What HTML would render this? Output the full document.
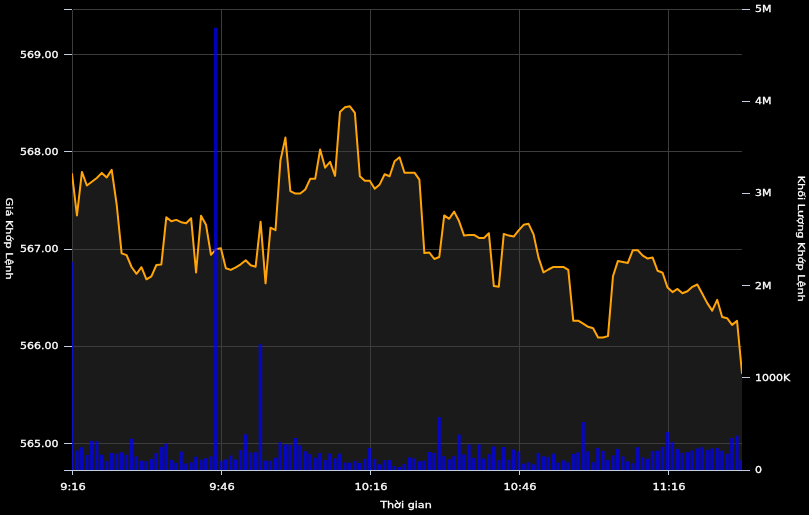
<!DOCTYPE html>
<html lang="vi">
<head>
<meta charset="utf-8">
<title>Giá Khớp Lệnh / Khối Lượng Khớp Lệnh</title>
<style>
html,body{margin:0;padding:0;background:#000;}
body{width:809px;height:515px;overflow:hidden;}
svg{display:block;will-change:transform;}
text{font-family:"DejaVu Sans","Liberation Sans",sans-serif;font-size:11px;font-weight:normal;fill:#fff;stroke:#fff;stroke-width:0.3px;}
</style>
</head>
<body>
<svg width="809" height="515" viewBox="0 0 809 515">
<rect x="0" y="0" width="809" height="515" fill="#000"/>
<defs><clipPath id="plot"><rect x="72" y="10" width="670" height="460"/></clipPath></defs>
<path d="M64 9.5H72M64 54.5H72M64 151.5H72M64 249.5H72M64 346.5H72M64 443.5H72M742 9.5H750M742 101.5H750M742 193.5H750M742 285.5H750M742 377.5H750M72.5 470V475M221.5 470V475M370.5 470V475M519.5 470V475M668.5 470V475M64 470.5H750" stroke="#c0d0e0" stroke-width="1" fill="none"/>
<g clip-path="url(#plot)">
<path d="M72.00 173.9 L76.96 215.4 L81.93 171.9 L86.89 185.5 L91.85 181.8 L96.81 178.0 L101.78 172.9 L106.74 177.4 L111.70 169.9 L116.67 204.5 L121.63 253.4 L126.59 255.1 L131.56 267.0 L136.52 273.8 L141.48 267.2 L146.44 279.3 L151.41 276.3 L156.37 265.0 L161.33 264.5 L166.30 217.3 L171.26 221.2 L176.22 219.9 L181.19 222.2 L186.15 223.2 L191.11 218.2 L196.07 272.4 L201.04 215.7 L206.00 224.7 L210.96 254.8 L215.93 249.3 L220.89 248.2 L225.85 268.2 L230.81 269.9 L235.78 267.3 L240.74 264.3 L245.70 260.3 L250.67 265.3 L255.63 266.7 L260.59 221.7 L265.56 283.3 L270.52 227.7 L275.48 230.2 L280.44 160.4 L285.41 137.6 L290.37 191.1 L295.33 193.6 L300.30 193.6 L305.26 189.5 L310.22 178.8 L315.19 178.8 L320.15 149.5 L325.11 167.7 L330.07 161.8 L335.04 175.8 L340.00 111.9 L344.96 107.3 L349.93 106.3 L354.89 112.9 L359.85 176.2 L364.81 180.8 L369.78 180.8 L374.74 188.7 L379.70 184.4 L384.67 174.3 L389.63 176.3 L394.59 161.2 L399.56 157.3 L404.52 172.7 L409.48 172.7 L414.44 172.7 L419.41 179.7 L424.37 253.1 L429.33 252.5 L434.30 259.0 L439.26 257.0 L444.22 215.4 L449.19 218.8 L454.15 211.6 L459.11 221.3 L464.07 235.6 L469.04 234.9 L474.00 234.9 L478.96 237.9 L483.93 237.9 L488.89 233.2 L493.85 286.1 L498.81 286.7 L503.78 233.9 L508.74 235.6 L513.70 236.6 L518.67 230.4 L523.63 224.8 L528.59 223.8 L533.56 234.4 L538.52 257.6 L543.48 272.4 L548.44 269.5 L553.41 266.9 L558.37 266.9 L563.33 266.9 L568.30 269.9 L573.26 320.7 L578.22 320.7 L583.19 323.7 L588.15 326.8 L593.11 328.2 L598.07 337.5 L603.04 337.5 L608.00 336.1 L612.96 276.3 L617.93 260.9 L622.89 261.9 L627.85 262.9 L632.81 250.2 L637.78 250.2 L642.74 255.6 L647.70 258.6 L652.67 257.6 L657.63 270.8 L662.59 272.8 L667.56 287.6 L672.52 292.1 L677.48 288.9 L682.44 293.2 L687.41 291.2 L692.37 286.8 L697.33 284.5 L702.30 293.8 L707.26 303.1 L712.22 310.6 L717.19 299.8 L722.15 317.0 L727.11 318.2 L732.07 324.9 L737.04 320.9 L742.00 373.0 L742 470 L72 470 Z" fill="#1a1a1a" stroke="none"/>
</g>
<path d="M73 9.5H742M73 54.5H742M73 151.5H742M73 249.5H742M73 346.5H742M73 443.5H742M72.5 10V470M221.5 10V470M370.5 10V470M519.5 10V470M668.5 10V470" stroke="#3c3c3c" stroke-width="1" fill="none"/>
<g clip-path="url(#plot)">
<path d="M72.00 173.9 L76.96 215.4 L81.93 171.9 L86.89 185.5 L91.85 181.8 L96.81 178.0 L101.78 172.9 L106.74 177.4 L111.70 169.9 L116.67 204.5 L121.63 253.4 L126.59 255.1 L131.56 267.0 L136.52 273.8 L141.48 267.2 L146.44 279.3 L151.41 276.3 L156.37 265.0 L161.33 264.5 L166.30 217.3 L171.26 221.2 L176.22 219.9 L181.19 222.2 L186.15 223.2 L191.11 218.2 L196.07 272.4 L201.04 215.7 L206.00 224.7 L210.96 254.8 L215.93 249.3 L220.89 248.2 L225.85 268.2 L230.81 269.9 L235.78 267.3 L240.74 264.3 L245.70 260.3 L250.67 265.3 L255.63 266.7 L260.59 221.7 L265.56 283.3 L270.52 227.7 L275.48 230.2 L280.44 160.4 L285.41 137.6 L290.37 191.1 L295.33 193.6 L300.30 193.6 L305.26 189.5 L310.22 178.8 L315.19 178.8 L320.15 149.5 L325.11 167.7 L330.07 161.8 L335.04 175.8 L340.00 111.9 L344.96 107.3 L349.93 106.3 L354.89 112.9 L359.85 176.2 L364.81 180.8 L369.78 180.8 L374.74 188.7 L379.70 184.4 L384.67 174.3 L389.63 176.3 L394.59 161.2 L399.56 157.3 L404.52 172.7 L409.48 172.7 L414.44 172.7 L419.41 179.7 L424.37 253.1 L429.33 252.5 L434.30 259.0 L439.26 257.0 L444.22 215.4 L449.19 218.8 L454.15 211.6 L459.11 221.3 L464.07 235.6 L469.04 234.9 L474.00 234.9 L478.96 237.9 L483.93 237.9 L488.89 233.2 L493.85 286.1 L498.81 286.7 L503.78 233.9 L508.74 235.6 L513.70 236.6 L518.67 230.4 L523.63 224.8 L528.59 223.8 L533.56 234.4 L538.52 257.6 L543.48 272.4 L548.44 269.5 L553.41 266.9 L558.37 266.9 L563.33 266.9 L568.30 269.9 L573.26 320.7 L578.22 320.7 L583.19 323.7 L588.15 326.8 L593.11 328.2 L598.07 337.5 L603.04 337.5 L608.00 336.1 L612.96 276.3 L617.93 260.9 L622.89 261.9 L627.85 262.9 L632.81 250.2 L637.78 250.2 L642.74 255.6 L647.70 258.6 L652.67 257.6 L657.63 270.8 L662.59 272.8 L667.56 287.6 L672.52 292.1 L677.48 288.9 L682.44 293.2 L687.41 291.2 L692.37 286.8 L697.33 284.5 L702.30 293.8 L707.26 303.1 L712.22 310.6 L717.19 299.8 L722.15 317.0 L727.11 318.2 L732.07 324.9 L737.04 320.9 L742.00 373.0" fill="none" stroke="#ffa50a" stroke-width="2" stroke-linejoin="round" stroke-linecap="round"/>
<path d="M70.10 470V261.8h3.5V470zM75.06 470V450.4h3.5V470zM80.03 470V447.3h3.5V470zM84.99 470V455.0h3.5V470zM89.95 470V440.8h3.5V470zM94.91 470V441.3h3.5V470zM99.88 470V454.7h3.5V470zM104.84 470V460.9h3.5V470zM109.80 470V452.9h3.5V470zM114.77 470V453.5h3.5V470zM119.73 470V452.2h3.5V470zM124.69 470V454.7h3.5V470zM129.66 470V438.8h3.5V470zM134.62 470V456.3h3.5V470zM139.58 470V460.7h3.5V470zM144.54 470V461.3h3.5V470zM149.51 470V459.1h3.5V470zM154.47 470V453.1h3.5V470zM159.43 470V447.0h3.5V470zM164.40 470V443.5h3.5V470zM169.36 470V459.7h3.5V470zM174.32 470V462.8h3.5V470zM179.29 470V451.4h3.5V470zM184.25 470V463.4h3.5V470zM189.21 470V462.2h3.5V470zM194.17 470V456.8h3.5V470zM199.14 470V459.7h3.5V470zM204.10 470V458.2h3.5V470zM209.06 470V456.2h3.5V470zM214.03 470V27.8h3.5V470zM218.99 470V460.7h3.5V470zM223.95 470V459.4h3.5V470zM228.91 470V455.6h3.5V470zM233.88 470V459.4h3.5V470zM238.84 470V450.0h3.5V470zM243.80 470V434.2h3.5V470zM248.77 470V452.6h3.5V470zM253.73 470V452.2h3.5V470zM258.69 470V344.2h3.5V470zM263.66 470V460.7h3.5V470zM268.62 470V460.7h3.5V470zM273.58 470V457.8h3.5V470zM278.54 470V442.0h3.5V470zM283.51 470V444.2h3.5V470zM288.47 470V444.5h3.5V470zM293.43 470V438.0h3.5V470zM298.40 470V445.2h3.5V470zM303.36 470V451.2h3.5V470zM308.32 470V453.9h3.5V470zM313.29 470V457.8h3.5V470zM318.25 470V452.9h3.5V470zM323.21 470V460.1h3.5V470zM328.17 470V453.5h3.5V470zM333.14 470V458.2h3.5V470zM338.10 470V453.7h3.5V470zM343.06 470V462.4h3.5V470zM348.03 470V462.8h3.5V470zM352.99 470V460.7h3.5V470zM357.95 470V463.0h3.5V470zM362.91 470V458.8h3.5V470zM367.88 470V447.9h3.5V470zM372.84 470V459.1h3.5V470zM377.80 470V464.3h3.5V470zM382.77 470V460.3h3.5V470zM387.73 470V460.1h3.5V470zM392.69 470V465.9h3.5V470zM397.66 470V466.9h3.5V470zM402.62 470V464.0h3.5V470zM407.58 470V457.5h3.5V470zM412.54 470V458.2h3.5V470zM417.51 470V461.2h3.5V470zM422.47 470V460.7h3.5V470zM427.43 470V451.9h3.5V470zM432.40 470V452.9h3.5V470zM437.36 470V417.2h3.5V470zM442.32 470V456.2h3.5V470zM447.29 470V459.3h3.5V470zM452.25 470V456.2h3.5V470zM457.21 470V434.6h3.5V470zM462.17 470V454.5h3.5V470zM467.14 470V444.4h3.5V470zM472.10 470V458.1h3.5V470zM477.06 470V444.2h3.5V470zM482.03 470V458.4h3.5V470zM486.99 470V454.1h3.5V470zM491.95 470V446.4h3.5V470zM496.91 470V460.1h3.5V470zM501.88 470V446.9h3.5V470zM506.84 470V459.4h3.5V470zM511.80 470V449.4h3.5V470zM516.77 470V451.6h3.5V470zM521.73 470V463.8h3.5V470zM526.69 470V461.9h3.5V470zM531.66 470V464.3h3.5V470zM536.62 470V452.9h3.5V470zM541.58 470V456.2h3.5V470zM546.54 470V457.0h3.5V470zM551.51 470V453.7h3.5V470zM556.47 470V462.4h3.5V470zM561.43 470V460.3h3.5V470zM566.40 470V462.4h3.5V470zM571.36 470V454.1h3.5V470zM576.32 470V452.2h3.5V470zM581.29 470V422.0h3.5V470zM586.25 470V451.2h3.5V470zM591.21 470V462.2h3.5V470zM596.17 470V448.1h3.5V470zM601.14 470V451.0h3.5V470zM606.10 470V460.1h3.5V470zM611.06 470V455.6h3.5V470zM616.03 470V448.9h3.5V470zM620.99 470V456.2h3.5V470zM625.95 470V461.2h3.5V470zM630.91 470V463.2h3.5V470zM635.88 470V447.3h3.5V470zM640.84 470V457.2h3.5V470zM645.80 470V458.8h3.5V470zM650.77 470V451.0h3.5V470zM655.73 470V450.7h3.5V470zM660.69 470V446.9h3.5V470zM665.66 470V432.1h3.5V470zM670.62 470V442.0h3.5V470zM675.58 470V449.1h3.5V470zM680.54 470V452.9h3.5V470zM685.51 470V452.2h3.5V470zM690.47 470V450.4h3.5V470zM695.43 470V448.5h3.5V470zM700.40 470V447.3h3.5V470zM705.36 470V450.0h3.5V470zM710.32 470V448.5h3.5V470zM715.29 470V448.1h3.5V470zM720.25 470V450.7h3.5V470zM725.21 470V453.7h3.5V470zM730.17 470V438.0h3.5V470zM735.14 470V435.8h3.5V470zM740.10 470V460.3h3.5V470z" fill="#0000ff" fill-opacity="0.72" stroke="none"/>
</g>
<g>
<text transform="translate(58.5 58) scale(1 0.87)" text-anchor="end">569.00</text>
<text transform="translate(58.5 155) scale(1 0.87)" text-anchor="end">568.00</text>
<text transform="translate(58.5 252) scale(1 0.87)" text-anchor="end">567.00</text>
<text transform="translate(58.5 349) scale(1 0.87)" text-anchor="end">566.00</text>
<text transform="translate(58.5 447) scale(1 0.87)" text-anchor="end">565.00</text>
<text transform="translate(755 12) scale(1 0.87)" text-anchor="start">5M</text>
<text transform="translate(755 104) scale(1 0.87)" text-anchor="start">4M</text>
<text transform="translate(755 196) scale(1 0.87)" text-anchor="start">3M</text>
<text transform="translate(755 289) scale(1 0.87)" text-anchor="start">2M</text>
<text transform="translate(755 381) scale(1 0.87)" text-anchor="start">1000K</text>
<text transform="translate(755 473) scale(1 0.87)" text-anchor="start">0</text>
<text transform="translate(73 490) scale(1.04 0.87)" text-anchor="middle">9:16</text>
<text transform="translate(222 490) scale(1.04 0.87)" text-anchor="middle">9:46</text>
<text transform="translate(371 490) scale(1.04 0.87)" text-anchor="middle">10:16</text>
<text transform="translate(520 490) scale(1.04 0.87)" text-anchor="middle">10:46</text>
<text transform="translate(669 490) scale(1.04 0.87)" text-anchor="middle">11:16</text>
<text transform="translate(406 507.9) scale(1.02 0.87)" text-anchor="middle">Thời gian</text>
<text transform="translate(6.1 238.6) rotate(90) scale(1.027 0.87)" text-anchor="middle">Giá Khớp Lệnh</text>
<text transform="translate(797.8 238.7) rotate(90) scale(1.026 0.87)" text-anchor="middle">Khối Lượng Khớp Lệnh</text>
</g>
</svg>
</body>
</html>
